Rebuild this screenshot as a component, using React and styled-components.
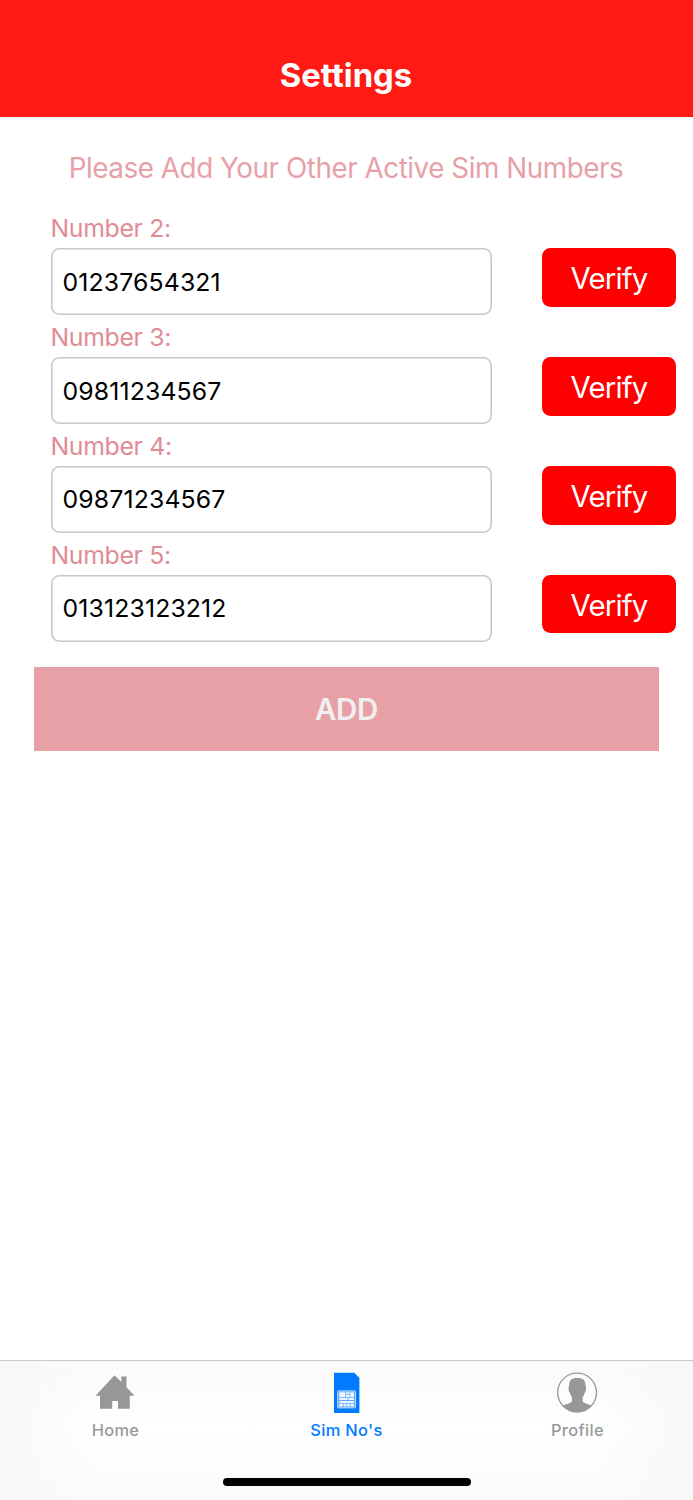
import React from 'react';
import styled, { createGlobalStyle } from 'styled-components';

const GlobalStyle = createGlobalStyle`
  * {
    box-sizing: border-box;
  }

  body {
    margin: 0;
    background-color: #ffffff;
    font-family: Inter, 'Liberation Sans', sans-serif;
  }
`;

const Screen = styled.div`
  display: flex;
  flex-direction: column;
  width: 693px;
  height: 1500px;
  overflow: hidden;
`;

const Header = styled.header`
  display: flex;
  justify-content: center;
  height: 117.4px;
  padding: 54px 1px 0 0;
  background-color: #ff1a14;
`;

const HeaderTitle = styled.h1`
  margin: 0;
  color: #ffffff;
  font-size: 32.8px;
  font-weight: 660;
  line-height: 43px;
  letter-spacing: 0;
`;

const Content = styled.main`
  flex: 1;
  padding: 32px 17px 0 34px;
`;

const Intro = styled.p`
  margin: 0 18px 25px 0;
  color: #e8a0a7;
  font-size: 27.8px;
  line-height: 39px;
  height: 40px;
  letter-spacing: -0.45px;
  text-align: center;
  white-space: nowrap;
`;

const NumberRow = styled.div`
  height: 108.8px;
  padding-left: 16.5px;
`;

const NumberLabel = styled.label`
  display: block;
  height: 34px;
  color: #e18c94;
  font-size: 24.8px;
  line-height: 28px;
  letter-spacing: -0.33px;
`;

const NumberFields = styled.div`
  display: flex;
  justify-content: space-between;
  align-items: flex-start;
`;

const NumberInput = styled.input`
  width: 441.5px;
  height: 67px;
  padding: 0 12px;
  border: 0;
  border-radius: 8.5px;
  outline: none;
  box-shadow: inset 0 0 0 1.6px #c8c8c8;
  background-color: #ffffff;
  color: #000000;
  font-family: inherit;
  font-size: 24.8px;
  letter-spacing: 0.14px;
`;

const VerifyButton = styled.button`
  width: 134px;
  height: 58.6px;
  padding: 2px 0 0;
  border: 0;
  border-radius: 8.4px;
  background-color: #ff0000;
  color: #ffffff;
  font-family: inherit;
  font-size: 29.4px;
  letter-spacing: -0.85px;
`;

const AddButton = styled.button`
  display: block;
  width: 625px;
  height: 83.5px;
  margin-top: 17.6px;
  padding: 1px 0 0;
  border: 0;
  background-color: #e8a0a7;
  color: #f0f0f0;
  font-family: inherit;
  font-size: 29.4px;
  font-weight: 560;
  letter-spacing: -0.2px;
`;

const TabBar = styled.nav`
  height: 140.4px;
  border-top: 1px solid #c9c9c9;
  background: linear-gradient(90deg, #f8f8f8, rgba(250, 250, 250, 0) 14%, rgba(250, 250, 250, 0) 86%, #f8f8f8),
    linear-gradient(#fafafa, #ffffff 45%, #fbfbfb);
`;

const Tabs = styled.div`
  display: grid;
  grid-template-columns: repeat(3, 1fr);
  height: 121px;
`;

const Tab = styled.a`
  display: flex;
  flex-direction: column;
  align-items: center;
  padding-top: 11px;
  color: ${props => (props.$active ? '#007aff' : '#999999')};
  font-size: 16.4px;
  font-weight: 480;
  line-height: 22px;
  letter-spacing: 0.35px;

  svg {
    margin-bottom: 5px;
  }
`;

const HomeIndicator = styled.div`
  width: 248px;
  height: 8.6px;
  margin: -4px auto 0;
  border-radius: 5px;
  background-color: #000000;
`;

const HomeIcon = () => (
  <svg width="42" height="42" viewBox="0 0 42 42" fill="#979797">
    <path d="M19.5 3.2L26.3 10V4.5H31.5V15.3L39.5 23.7H34.8V36.7H23V29H17.2V36.7H5V23.7H.5Z" />
  </svg>
);

const SimIcon = () => (
  <svg width="42" height="42" viewBox="0 0 42 42" fill="none">
    <path d="M8 .8H28.3L33.4 5.9V41H8Z" fill="#007aff" />
    <rect x="11.7" y="18.9" width="17.8" height="17" rx="0.8" fill="#5eaaff" stroke="#d5e8ff" strokeWidth="0.9" />
    <path
      d="M13.3 20.3H19.3V25.3H13.3ZM20 22.8H23.6V25.3H20ZM20 20.3H23.6V22H20ZM24.3 20.3H27.9V25.3H24.3ZM13.3 26.1H21.6V28.1H13.3ZM22.4 26.1H27.9V28.1H22.4ZM13.3 28.9H27.9V30.9H13.3ZM13.3 31.7H16.9V34.5H13.3ZM17.7 31.7H20.4V34.5H17.7ZM21.2 31.7H23.9V34.5H21.2ZM24.7 31.7H27.9V34.5H24.7Z"
      fill="#f0f7ff"
    />
  </svg>
);

const ProfileIcon = () => (
  <svg width="42" height="42" viewBox="0 0 42 42" fill="none">
    <circle cx="20.1" cy="20.6" r="19.4" stroke="#979797" strokeWidth="1.3" />
    <path
      d="M20.3 6C26 5.8 28.7 8.3 28.5 14C29.7 14.2 29 20.6 27.7 20.8C27.3 23 26.2 24.3 25.6 25.5V29C26.3 31.3 30.5 31.8 34.4 33.8A19.4 19.4 0 0 1 5.8 33.8C9.7 31.8 14.3 31.3 15 29V25.5C14.4 24.3 13.3 23 12.9 20.8C11.6 20.6 10.9 14.2 12.1 14C11.9 8.3 14.6 5.8 20.3 6Z"
      fill="#979797"
    />
  </svg>
);

export default class App extends React.Component {
  constructor(props) {
    super(props);
    this.state = {
      numbers: ['01237654321', '09811234567', '09871234567', '013123123212']
    };
    this.handleNumberChange = this.handleNumberChange.bind(this);
  }

  handleNumberChange(index, value) {
    this.setState(({ numbers }) => ({
      numbers: numbers.map((number, i) => (i === index ? value : number))
    }));
  }

  render() {
    const { numbers } = this.state;
    return (
      <Screen>
        <GlobalStyle />
        <Header>
          <HeaderTitle>Settings</HeaderTitle>
        </Header>
        <Content>
          <Intro>Please Add Your Other Active Sim Numbers</Intro>
          {numbers.map((number, index) => (
            <NumberRow key={index}>
              <NumberLabel htmlFor={`number-${index}`}>
                Number {index + 2}:
              </NumberLabel>
              <NumberFields>
                <NumberInput
                  id={`number-${index}`}
                  value={number}
                  onChange={e => this.handleNumberChange(index, e.target.value)}
                />
                <VerifyButton type="button">Verify</VerifyButton>
              </NumberFields>
            </NumberRow>
          ))}
          <AddButton type="button">ADD</AddButton>
        </Content>
        <TabBar>
          <Tabs>
            <Tab>
              <HomeIcon />
              Home
            </Tab>
            <Tab $active>
              <SimIcon />
              Sim No&apos;s
            </Tab>
            <Tab>
              <ProfileIcon />
              Profile
            </Tab>
          </Tabs>
          <HomeIndicator />
        </TabBar>
      </Screen>
    );
  }
}
